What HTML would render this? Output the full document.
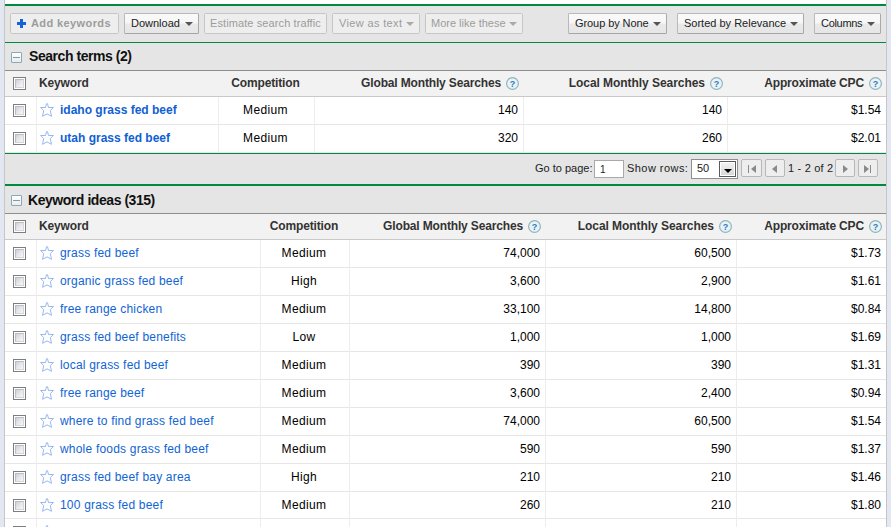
<!DOCTYPE html>
<html><head><meta charset="utf-8"><title>Keyword Tool</title>
<style>
*{margin:0;padding:0;box-sizing:content-box}
html,body{width:891px;height:527px;overflow:hidden;background:#fff;font-family:"Liberation Sans", sans-serif}
#wrap{position:relative;width:891px;height:527px;overflow:hidden}
#wrap div,#wrap svg{position:absolute}
.strip{top:0;width:4px;height:527px;background:#e2e7f1}
.bord{top:0;width:1px;height:527px;background:#c6c6c6}
.bg{left:5px;width:881px}
.green{left:5px;width:881px;background:#008a40}
.btn{top:13px;height:19px;border:1px solid #bdbdbd;border-radius:1.5px;background:linear-gradient(#fafafa 0%,#f6f6f6 48%,#e9e9e9 52%,#e6e6e6 100%);border-color:#b9b9b9 #a9a9a9 #a5a5a5 #b9b9b9}
.btn.dis{background:#eeeeee;border-color:#c6c6c6}
.t11{font-size:11px;line-height:13px;white-space:nowrap}
.t13b{font-size:14px;font-weight:bold;line-height:16px;color:#111;white-space:nowrap;letter-spacing:-0.45px}
.arr{width:0;height:0;border-style:solid;border-width:4px 4px 0 4px;border-color:transparent;border-top-color:#555}
.plus1{background:#1762d6}
.col{width:9px;height:9px;border:1px solid #88a9b7;border-radius:1px;background:linear-gradient(#ffffff,#ececec)}
.col i{position:absolute;left:1px;top:4px;width:7px;height:1px;background:#7b9bb1}
.thbg{left:5px;width:881px;height:25px;background:#f2f2f2;border-bottom:1px solid #c9c9c9}
.th{font-size:12px;font-weight:bold;line-height:15px;color:#333;white-space:nowrap;letter-spacing:-0.15px}
.td{font-size:12px;line-height:15px;color:#000;white-space:nowrap}
.kw{font-size:12px;line-height:15px;color:#1164d4;white-space:nowrap;letter-spacing:0.2px}
.kwb{font-size:12px;line-height:15px;color:#0f60d4;font-weight:bold;white-space:nowrap}
.cb{width:11px;height:11px;border:1px solid #7e7e7e;background:#fff}
.cb i{position:absolute;left:1px;top:1px;width:7px;height:7px;border:1px solid;border-color:#b9bdc5 #d3d5d9 #d3d5d9 #b9bdc5;background:linear-gradient(135deg,#ccd0d7 0%,#e6e7ea 50%,#f7f7f7 100%)}
.rsep{left:5px;width:881px;height:1px;background:#e6e6e6}
.vsep{width:1px;background:#ededed}
.inp{border:1px solid #a9a9a9;background:#fff}
.sel{border:1px solid #8e8e8e;background:#fff}
.selbtn{border:1px solid #5a5a5a;background:#fff}
.selbtn i{position:absolute;left:1px;top:1px;width:13px;height:12px;background:linear-gradient(#f2f2f2,#d9d9d9)}
.pbtn{border:1px solid #b8b8b8;border-radius:2px;background:#eeeeee}
.pbar{width:1px;height:8px;background:#8a8a8a}
.tril{width:0;height:0;border-style:solid;border-width:4px 5px 4px 0;border-color:transparent #8a8a8a transparent transparent}
.trir{width:0;height:0;border-style:solid;border-width:4px 0 4px 5px;border-color:transparent transparent transparent #8a8a8a}
</style></head>
<body><div id="wrap">
<div class="strip" style="left:0"></div>
<div class="bord" style="left:4px"></div>
<div class="bord" style="left:886px"></div>
<div class="strip" style="left:887px"></div>
<div class="green" style="top:4px;height:2px"></div>
<div class="bg" style="top:6px;height:36px;background:#e5e5e5"></div>
<div class="green" style="top:42px;height:1px"></div>
<div class="bg" style="top:43px;height:27px;background:#e5e5e5"></div>
<div class="bg" style="top:70px;height:1px;background:#8e8e8e"></div>
<div class="green" style="top:153px;height:1px"></div>
<div class="bg" style="top:154px;height:30px;background:#e5e5e5"></div>
<div class="green" style="top:184px;height:2px"></div>
<div class="bg" style="top:186px;height:27px;background:#e5e5e5"></div>
<div class="bg" style="top:213px;height:1px;background:#8e8e8e"></div>
<div class="btn dis" style="left:10px;width:107px"></div><div class="t11" style="left:31px;top:17px;color:#9c9c9c;font-weight:bold;letter-spacing:0.4px">Add keywords</div>
<div class="plus1" style="left:17px;top:22px;width:9px;height:3px"></div><div class="plus1" style="left:20px;top:19px;width:3px;height:9px"></div>
<div class="btn" style="left:124px;width:73px"></div><div class="t11" style="left:131px;top:17px;color:#222;font-weight:normal;letter-spacing:0">Download</div><div class="arr" style="left:185px;top:22px;border-top-color:#555"></div>
<div class="btn dis" style="left:204px;width:121px"></div><div class="t11" style="left:210px;top:17px;color:#9c9c9c;font-weight:normal;letter-spacing:0.1px">Estimate search traffic</div>
<div class="btn dis" style="left:332px;width:86px"></div><div class="t11" style="left:339px;top:17px;color:#9c9c9c;font-weight:normal;letter-spacing:0.35px">View as text</div><div class="arr" style="left:406px;top:22px;border-top-color:#aaa"></div>
<div class="btn dis" style="left:425px;width:96px"></div><div class="t11" style="left:431px;top:17px;color:#9c9c9c;font-weight:normal;letter-spacing:0">More like these</div><div class="arr" style="left:509px;top:22px;border-top-color:#aaa"></div>
<div class="btn" style="left:568px;width:97px"></div><div class="t11" style="left:575px;top:17px;color:#222;font-weight:normal;letter-spacing:-0.08px">Group by None</div><div class="arr" style="left:653px;top:22px;border-top-color:#555"></div>
<div class="btn" style="left:677px;width:125px"></div><div class="t11" style="left:684px;top:17px;color:#222;font-weight:normal;letter-spacing:0">Sorted by Relevance</div><div class="arr" style="left:790px;top:22px;border-top-color:#555"></div>
<div class="btn" style="left:814px;width:65px"></div><div class="t11" style="left:821px;top:17px;color:#222;font-weight:normal;letter-spacing:-0.3px">Columns</div><div class="arr" style="left:867px;top:22px;border-top-color:#555"></div>
<div class="col" style="left:11px;top:52px"><i></i></div>
<div class="t13b" style="left:29px;top:48px">Search terms (2)</div>
<div class="thbg" style="top:71px"></div><div class="cb" style="left:13px;top:77px"><i></i></div><div class="th" style="left:39px;top:76px">Keyword</div><div class="th" style="left:219px;width:93px;text-align:center;top:76px">Competition</div><div class="th" style="right:390px;top:76px">Global Monthly Searches</div><svg class="hp" style="left:506px;top:77px" width="13" height="13" viewBox="0 0 13 13"><circle cx="6.5" cy="6.5" r="5.9" fill="#e4f4f8" stroke="#93b3b9" stroke-width="1.2"/><text x="6.5" y="9.9" text-anchor="middle" font-family="Liberation Sans" font-weight="bold" font-size="9" fill="#3f74b3">?</text></svg><div class="th" style="right:186px;top:76px;letter-spacing:-0.05px">Local Monthly Searches</div><svg class="hp" style="left:710px;top:77px" width="13" height="13" viewBox="0 0 13 13"><circle cx="6.5" cy="6.5" r="5.9" fill="#e4f4f8" stroke="#93b3b9" stroke-width="1.2"/><text x="6.5" y="9.9" text-anchor="middle" font-family="Liberation Sans" font-weight="bold" font-size="9" fill="#3f74b3">?</text></svg><div class="th" style="right:27px;top:76px">Approximate CPC</div><svg class="hp" style="left:869px;top:77px" width="13" height="13" viewBox="0 0 13 13"><circle cx="6.5" cy="6.5" r="5.9" fill="#e4f4f8" stroke="#93b3b9" stroke-width="1.2"/><text x="6.5" y="9.9" text-anchor="middle" font-family="Liberation Sans" font-weight="bold" font-size="9" fill="#3f74b3">?</text></svg><div class="rsep" style="top:124px"></div><div class="cb" style="left:13px;top:104px"><i></i></div><svg class="st" style="left:40px;top:103px" width="15" height="15" viewBox="0 0 15 15"><path d="M6.5 0.7 L7.5 0.7 L8.5 4.5 L13.4 4.5 L10.3 7.6 L11.5 13.3 L7 10.9 L2.5 13.3 L3.7 7.6 L0.6 4.5 L5.5 4.5 Z" fill="none" stroke="#92b3f1" stroke-width="0.95" stroke-linejoin="miter"/></svg><div class="kwb" style="left:60px;top:103px">idaho grass fed beef</div><div class="td" style="left:219px;width:93px;text-align:center;top:103px;letter-spacing:0.35px">Medium</div><div class="td" style="right:373px;top:103px">140</div><div class="td" style="right:169px;top:103px">140</div><div class="td" style="right:10px;top:103px">$1.54</div><div class="rsep" style="top:152px"></div><div class="cb" style="left:13px;top:132px"><i></i></div><svg class="st" style="left:40px;top:131px" width="15" height="15" viewBox="0 0 15 15"><path d="M6.5 0.7 L7.5 0.7 L8.5 4.5 L13.4 4.5 L10.3 7.6 L11.5 13.3 L7 10.9 L2.5 13.3 L3.7 7.6 L0.6 4.5 L5.5 4.5 Z" fill="none" stroke="#92b3f1" stroke-width="0.95" stroke-linejoin="miter"/></svg><div class="kwb" style="left:60px;top:131px">utah grass fed beef</div><div class="td" style="left:219px;width:93px;text-align:center;top:131px;letter-spacing:0.35px">Medium</div><div class="td" style="right:373px;top:131px">320</div><div class="td" style="right:169px;top:131px">260</div><div class="td" style="right:10px;top:131px">$2.01</div><div class="vsep" style="left:36px;top:97px;height:56px"></div><div class="vsep" style="left:218px;top:97px;height:56px"></div><div class="vsep" style="left:314px;top:97px;height:56px"></div><div class="vsep" style="left:523px;top:97px;height:56px"></div><div class="vsep" style="left:727px;top:97px;height:56px"></div>
<div class="t11" style="left:535px;top:162px;color:#222">Go to page:</div>
<div class="inp" style="left:594px;top:160px;width:28px;height:16px"></div>
<div class="t11" style="left:600px;top:163px;color:#222;font-size:10px">1</div>
<div class="t11" style="left:627px;top:162px;color:#222;letter-spacing:0.45px">Show rows:</div>
<div class="sel" style="left:691px;top:159px;width:45px;height:18px"></div>
<div class="t11" style="left:697px;top:162px;color:#222">50</div>
<div class="selbtn" style="left:719px;top:161px;width:15px;height:14px"><i></i></div>
<div class="arr" style="left:724px;top:169px;border-width:4px 4px 0 4px;border-top-color:#000"></div>
<div class="pbtn" style="left:741px;top:159px;width:19px;height:16px"></div>
<div class="pbtn" style="left:765px;top:159px;width:18px;height:16px"></div>
<div class="pbtn" style="left:835px;top:159px;width:18px;height:16px"></div>
<div class="pbtn" style="left:858px;top:159px;width:18px;height:16px"></div>
<div class="pbar" style="left:748px;top:165px"></div><div class="tril" style="left:751px;top:165px"></div>
<div class="tril" style="left:772px;top:165px"></div>
<div class="t11" style="left:788px;top:162px;color:#222;letter-spacing:0.2px">1 - 2 of 2</div>
<div class="trir" style="left:843px;top:165px"></div>
<div class="trir" style="left:864px;top:165px"></div><div class="pbar" style="left:870px;top:165px"></div>
<div class="col" style="left:11px;top:195px"><i></i></div>
<div class="t13b" style="left:28px;top:192px">Keyword ideas (315)</div>
<div class="thbg" style="top:214px"></div><div class="cb" style="left:13px;top:220px"><i></i></div><div class="th" style="left:39px;top:219px">Keyword</div><div class="th" style="left:261px;width:86px;text-align:center;top:219px">Competition</div><div class="th" style="right:368px;top:219px">Global Monthly Searches</div><svg class="hp" style="left:528px;top:220px" width="13" height="13" viewBox="0 0 13 13"><circle cx="6.5" cy="6.5" r="5.9" fill="#e4f4f8" stroke="#93b3b9" stroke-width="1.2"/><text x="6.5" y="9.9" text-anchor="middle" font-family="Liberation Sans" font-weight="bold" font-size="9" fill="#3f74b3">?</text></svg><div class="th" style="right:177px;top:219px;letter-spacing:-0.05px">Local Monthly Searches</div><svg class="hp" style="left:719px;top:220px" width="13" height="13" viewBox="0 0 13 13"><circle cx="6.5" cy="6.5" r="5.9" fill="#e4f4f8" stroke="#93b3b9" stroke-width="1.2"/><text x="6.5" y="9.9" text-anchor="middle" font-family="Liberation Sans" font-weight="bold" font-size="9" fill="#3f74b3">?</text></svg><div class="th" style="right:27px;top:219px">Approximate CPC</div><svg class="hp" style="left:869px;top:220px" width="13" height="13" viewBox="0 0 13 13"><circle cx="6.5" cy="6.5" r="5.9" fill="#e4f4f8" stroke="#93b3b9" stroke-width="1.2"/><text x="6.5" y="9.9" text-anchor="middle" font-family="Liberation Sans" font-weight="bold" font-size="9" fill="#3f74b3">?</text></svg><div class="rsep" style="top:267px"></div><div class="cb" style="left:13px;top:247px"><i></i></div><svg class="st" style="left:40px;top:246px" width="15" height="15" viewBox="0 0 15 15"><path d="M6.5 0.7 L7.5 0.7 L8.5 4.5 L13.4 4.5 L10.3 7.6 L11.5 13.3 L7 10.9 L2.5 13.3 L3.7 7.6 L0.6 4.5 L5.5 4.5 Z" fill="none" stroke="#92b3f1" stroke-width="0.95" stroke-linejoin="miter"/></svg><div class="kw" style="left:60px;top:246px">grass fed beef</div><div class="td" style="left:261px;width:86px;text-align:center;top:246px;letter-spacing:0.35px">Medium</div><div class="td" style="right:351px;top:246px">74,000</div><div class="td" style="right:160px;top:246px">60,500</div><div class="td" style="right:10px;top:246px">$1.73</div><div class="rsep" style="top:295px"></div><div class="cb" style="left:13px;top:275px"><i></i></div><svg class="st" style="left:40px;top:274px" width="15" height="15" viewBox="0 0 15 15"><path d="M6.5 0.7 L7.5 0.7 L8.5 4.5 L13.4 4.5 L10.3 7.6 L11.5 13.3 L7 10.9 L2.5 13.3 L3.7 7.6 L0.6 4.5 L5.5 4.5 Z" fill="none" stroke="#92b3f1" stroke-width="0.95" stroke-linejoin="miter"/></svg><div class="kw" style="left:60px;top:274px">organic grass fed beef</div><div class="td" style="left:261px;width:86px;text-align:center;top:274px;letter-spacing:0.35px">High</div><div class="td" style="right:351px;top:274px">3,600</div><div class="td" style="right:160px;top:274px">2,900</div><div class="td" style="right:10px;top:274px">$1.61</div><div class="rsep" style="top:323px"></div><div class="cb" style="left:13px;top:303px"><i></i></div><svg class="st" style="left:40px;top:302px" width="15" height="15" viewBox="0 0 15 15"><path d="M6.5 0.7 L7.5 0.7 L8.5 4.5 L13.4 4.5 L10.3 7.6 L11.5 13.3 L7 10.9 L2.5 13.3 L3.7 7.6 L0.6 4.5 L5.5 4.5 Z" fill="none" stroke="#92b3f1" stroke-width="0.95" stroke-linejoin="miter"/></svg><div class="kw" style="left:60px;top:302px">free range chicken</div><div class="td" style="left:261px;width:86px;text-align:center;top:302px;letter-spacing:0.35px">Medium</div><div class="td" style="right:351px;top:302px">33,100</div><div class="td" style="right:160px;top:302px">14,800</div><div class="td" style="right:10px;top:302px">$0.84</div><div class="rsep" style="top:351px"></div><div class="cb" style="left:13px;top:331px"><i></i></div><svg class="st" style="left:40px;top:330px" width="15" height="15" viewBox="0 0 15 15"><path d="M6.5 0.7 L7.5 0.7 L8.5 4.5 L13.4 4.5 L10.3 7.6 L11.5 13.3 L7 10.9 L2.5 13.3 L3.7 7.6 L0.6 4.5 L5.5 4.5 Z" fill="none" stroke="#92b3f1" stroke-width="0.95" stroke-linejoin="miter"/></svg><div class="kw" style="left:60px;top:330px">grass fed beef benefits</div><div class="td" style="left:261px;width:86px;text-align:center;top:330px;letter-spacing:0.35px">Low</div><div class="td" style="right:351px;top:330px">1,000</div><div class="td" style="right:160px;top:330px">1,000</div><div class="td" style="right:10px;top:330px">$1.69</div><div class="rsep" style="top:379px"></div><div class="cb" style="left:13px;top:359px"><i></i></div><svg class="st" style="left:40px;top:358px" width="15" height="15" viewBox="0 0 15 15"><path d="M6.5 0.7 L7.5 0.7 L8.5 4.5 L13.4 4.5 L10.3 7.6 L11.5 13.3 L7 10.9 L2.5 13.3 L3.7 7.6 L0.6 4.5 L5.5 4.5 Z" fill="none" stroke="#92b3f1" stroke-width="0.95" stroke-linejoin="miter"/></svg><div class="kw" style="left:60px;top:358px">local grass fed beef</div><div class="td" style="left:261px;width:86px;text-align:center;top:358px;letter-spacing:0.35px">Medium</div><div class="td" style="right:351px;top:358px">390</div><div class="td" style="right:160px;top:358px">390</div><div class="td" style="right:10px;top:358px">$1.31</div><div class="rsep" style="top:407px"></div><div class="cb" style="left:13px;top:387px"><i></i></div><svg class="st" style="left:40px;top:386px" width="15" height="15" viewBox="0 0 15 15"><path d="M6.5 0.7 L7.5 0.7 L8.5 4.5 L13.4 4.5 L10.3 7.6 L11.5 13.3 L7 10.9 L2.5 13.3 L3.7 7.6 L0.6 4.5 L5.5 4.5 Z" fill="none" stroke="#92b3f1" stroke-width="0.95" stroke-linejoin="miter"/></svg><div class="kw" style="left:60px;top:386px">free range beef</div><div class="td" style="left:261px;width:86px;text-align:center;top:386px;letter-spacing:0.35px">Medium</div><div class="td" style="right:351px;top:386px">3,600</div><div class="td" style="right:160px;top:386px">2,400</div><div class="td" style="right:10px;top:386px">$0.94</div><div class="rsep" style="top:435px"></div><div class="cb" style="left:13px;top:415px"><i></i></div><svg class="st" style="left:40px;top:414px" width="15" height="15" viewBox="0 0 15 15"><path d="M6.5 0.7 L7.5 0.7 L8.5 4.5 L13.4 4.5 L10.3 7.6 L11.5 13.3 L7 10.9 L2.5 13.3 L3.7 7.6 L0.6 4.5 L5.5 4.5 Z" fill="none" stroke="#92b3f1" stroke-width="0.95" stroke-linejoin="miter"/></svg><div class="kw" style="left:60px;top:414px">where to find grass fed beef</div><div class="td" style="left:261px;width:86px;text-align:center;top:414px;letter-spacing:0.35px">Medium</div><div class="td" style="right:351px;top:414px">74,000</div><div class="td" style="right:160px;top:414px">60,500</div><div class="td" style="right:10px;top:414px">$1.54</div><div class="rsep" style="top:463px"></div><div class="cb" style="left:13px;top:443px"><i></i></div><svg class="st" style="left:40px;top:442px" width="15" height="15" viewBox="0 0 15 15"><path d="M6.5 0.7 L7.5 0.7 L8.5 4.5 L13.4 4.5 L10.3 7.6 L11.5 13.3 L7 10.9 L2.5 13.3 L3.7 7.6 L0.6 4.5 L5.5 4.5 Z" fill="none" stroke="#92b3f1" stroke-width="0.95" stroke-linejoin="miter"/></svg><div class="kw" style="left:60px;top:442px">whole foods grass fed beef</div><div class="td" style="left:261px;width:86px;text-align:center;top:442px;letter-spacing:0.35px">Medium</div><div class="td" style="right:351px;top:442px">590</div><div class="td" style="right:160px;top:442px">590</div><div class="td" style="right:10px;top:442px">$1.37</div><div class="rsep" style="top:491px"></div><div class="cb" style="left:13px;top:471px"><i></i></div><svg class="st" style="left:40px;top:470px" width="15" height="15" viewBox="0 0 15 15"><path d="M6.5 0.7 L7.5 0.7 L8.5 4.5 L13.4 4.5 L10.3 7.6 L11.5 13.3 L7 10.9 L2.5 13.3 L3.7 7.6 L0.6 4.5 L5.5 4.5 Z" fill="none" stroke="#92b3f1" stroke-width="0.95" stroke-linejoin="miter"/></svg><div class="kw" style="left:60px;top:470px">grass fed beef bay area</div><div class="td" style="left:261px;width:86px;text-align:center;top:470px;letter-spacing:0.35px">High</div><div class="td" style="right:351px;top:470px">210</div><div class="td" style="right:160px;top:470px">210</div><div class="td" style="right:10px;top:470px">$1.46</div><div class="rsep" style="top:518px"></div><div class="cb" style="left:13px;top:499px"><i></i></div><svg class="st" style="left:40px;top:498px" width="15" height="15" viewBox="0 0 15 15"><path d="M6.5 0.7 L7.5 0.7 L8.5 4.5 L13.4 4.5 L10.3 7.6 L11.5 13.3 L7 10.9 L2.5 13.3 L3.7 7.6 L0.6 4.5 L5.5 4.5 Z" fill="none" stroke="#92b3f1" stroke-width="0.95" stroke-linejoin="miter"/></svg><div class="kw" style="left:60px;top:498px">100 grass fed beef</div><div class="td" style="left:261px;width:86px;text-align:center;top:498px;letter-spacing:0.35px">Medium</div><div class="td" style="right:351px;top:498px">260</div><div class="td" style="right:160px;top:498px">210</div><div class="td" style="right:10px;top:498px">$1.80</div><div class="rsep" style="top:546px"></div><div class="cb" style="left:13px;top:526px"><i></i></div><svg class="st" style="left:40px;top:525px" width="15" height="15" viewBox="0 0 15 15"><path d="M6.5 0.7 L7.5 0.7 L8.5 4.5 L13.4 4.5 L10.3 7.6 L11.5 13.3 L7 10.9 L2.5 13.3 L3.7 7.6 L0.6 4.5 L5.5 4.5 Z" fill="none" stroke="#92b3f1" stroke-width="0.95" stroke-linejoin="miter"/></svg><div class="kw" style="left:60px;top:525px"></div><div class="td" style="left:261px;width:86px;text-align:center;top:525px;letter-spacing:0.35px"></div><div class="td" style="right:351px;top:525px"></div><div class="td" style="right:160px;top:525px"></div><div class="td" style="right:10px;top:525px"></div><div class="vsep" style="left:36px;top:240px;height:308px"></div><div class="vsep" style="left:260px;top:240px;height:308px"></div><div class="vsep" style="left:349px;top:240px;height:308px"></div><div class="vsep" style="left:545px;top:240px;height:308px"></div><div class="vsep" style="left:736px;top:240px;height:308px"></div>
</div></body></html>
